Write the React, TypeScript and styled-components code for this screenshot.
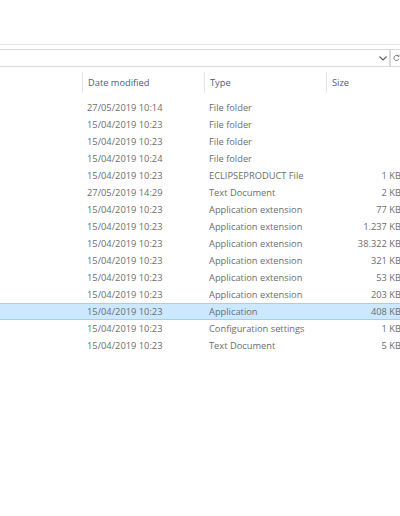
import React from 'react';
import styled, { createGlobalStyle } from 'styled-components';

const GlobalStyle = createGlobalStyle`
  html, body {
    margin: 0;
    padding: 0;
    background: #ffffff;
  }
  body {
    font-family: 'Open Sans', 'Noto Sans', sans-serif;
    overflow: hidden;
  }
`;

type FileRow = {
  date: string;
  type: string;
  size?: string;
  selected?: boolean;
};

const rows: FileRow[] = [
  { date: '27/05/2019 10:14', type: 'File folder' },
  { date: '15/04/2019 10:23', type: 'File folder' },
  { date: '15/04/2019 10:23', type: 'File folder' },
  { date: '15/04/2019 10:24', type: 'File folder' },
  { date: '15/04/2019 10:23', type: 'ECLIPSEPRODUCT File', size: '1 KB' },
  { date: '27/05/2019 14:29', type: 'Text Document', size: '2 KB' },
  { date: '15/04/2019 10:23', type: 'Application extension', size: '77 KB' },
  { date: '15/04/2019 10:23', type: 'Application extension', size: '1.237 KB' },
  { date: '15/04/2019 10:23', type: 'Application extension', size: '38.322 KB' },
  { date: '15/04/2019 10:23', type: 'Application extension', size: '321 KB' },
  { date: '15/04/2019 10:23', type: 'Application extension', size: '53 KB' },
  { date: '15/04/2019 10:23', type: 'Application extension', size: '203 KB' },
  { date: '15/04/2019 10:23', type: 'Application', size: '408 KB', selected: true },
  { date: '15/04/2019 10:23', type: 'Configuration settings', size: '1 KB' },
  { date: '15/04/2019 10:23', type: 'Text Document', size: '5 KB' },
];

const Window = styled.div`
  width: 400px;
  height: 516px;
  overflow: hidden;
  background: #ffffff;
`;

const Ribbon = styled.div`
  height: 44px;
  border-bottom: 1px solid #e8e8e8;
`;

const AddressRow = styled.div`
  display: flex;
  align-items: center;
  height: 18px;
  margin-top: 4px;
`;

const AddressBox = styled.div`
  flex: 1;
  height: 18px;
  border: 1px solid #d9d9d9;
  border-left: none;
  display: flex;
  align-items: center;
  justify-content: flex-end;
  box-sizing: border-box;
`;

const DropButton = styled.div`
  width: 12px;
  height: 16px;
  display: flex;
  align-items: center;
  justify-content: center;
`;

const RefreshButton = styled.div`
  width: 10px;
  height: 18px;
  border-top: 1px solid #d9d9d9;
  border-bottom: 1px solid #d9d9d9;
  border-left: 1px solid #d9d9d9;
  box-sizing: border-box;
  display: flex;
  align-items: center;
  padding-left: 2px;
`;

const Table = styled.div`
  margin-top: 5px;
  width: 420px;
`;

const Grid = styled.div`
  display: grid;
  grid-template-columns: 82px 122px 122px 94px;
`;

const HeaderRow = styled(Grid)`
  height: 21px;
  margin-bottom: 6px;
`;

const HeaderCell = styled.div<{ $sep?: boolean }>`
  font-size: 9.3px;
  color: #4c607a;
  padding-left: 5px;
  line-height: 21px;
  border-left: ${(p) => (p.$sep ? '1px solid #e5e5e5' : 'none')};
`;

const Row = styled(Grid)<{ $selected?: boolean }>`
  height: 17px;
  box-sizing: border-box;
  background: ${(p) => (p.$selected ? '#cce8ff' : 'transparent')};
  border-top: 1px solid ${(p) => (p.$selected ? '#99d1ff' : 'transparent')};
  border-bottom: 1px solid ${(p) => (p.$selected ? '#99d1ff' : 'transparent')};
`;

const Cell = styled.div<{ $right?: boolean }>`
  font-size: 9.3px;
  color: #6d6d6d;
  line-height: 15px;
  padding-left: 5px;
  padding-right: ${(p) => (p.$right ? '19px' : '0')};
  text-align: ${(p) => (p.$right ? 'right' : 'left')};
  white-space: nowrap;
  overflow: hidden;
`;

export default function App() {
  return (
    <Window>
      <GlobalStyle />
      <Ribbon />
      <AddressRow>
        <AddressBox>
          <DropButton>
            <svg width="8" height="5" viewBox="0 0 8 5">
              <path d="M0.5 0.5 L4 4 L7.5 0.5" fill="none" stroke="#606060" strokeWidth="1.2" />
            </svg>
          </DropButton>
        </AddressBox>
        <RefreshButton>
          <svg width="10" height="10" viewBox="0 0 10 10">
            <path d="M8 3 A3.6 3.6 0 1 0 8.4 6" fill="none" stroke="#606060" strokeWidth="1.2" />
            <path d="M5.6 0.8 L8.4 3.2 L8.6 0.4" fill="none" stroke="#606060" strokeWidth="1.1" />
          </svg>
        </RefreshButton>
      </AddressRow>
      <Table>
        <HeaderRow>
          <HeaderCell />
          <HeaderCell $sep>Date modified</HeaderCell>
          <HeaderCell $sep>Type</HeaderCell>
          <HeaderCell $sep>Size</HeaderCell>
        </HeaderRow>
        {rows.map((r, i) => (
          <Row key={i} $selected={r.selected}>
            <Cell />
            <Cell>{r.date}</Cell>
            <Cell>{r.type}</Cell>
            <Cell $right>{r.size}</Cell>
          </Row>
        ))}
      </Table>
    </Window>
  );
}
